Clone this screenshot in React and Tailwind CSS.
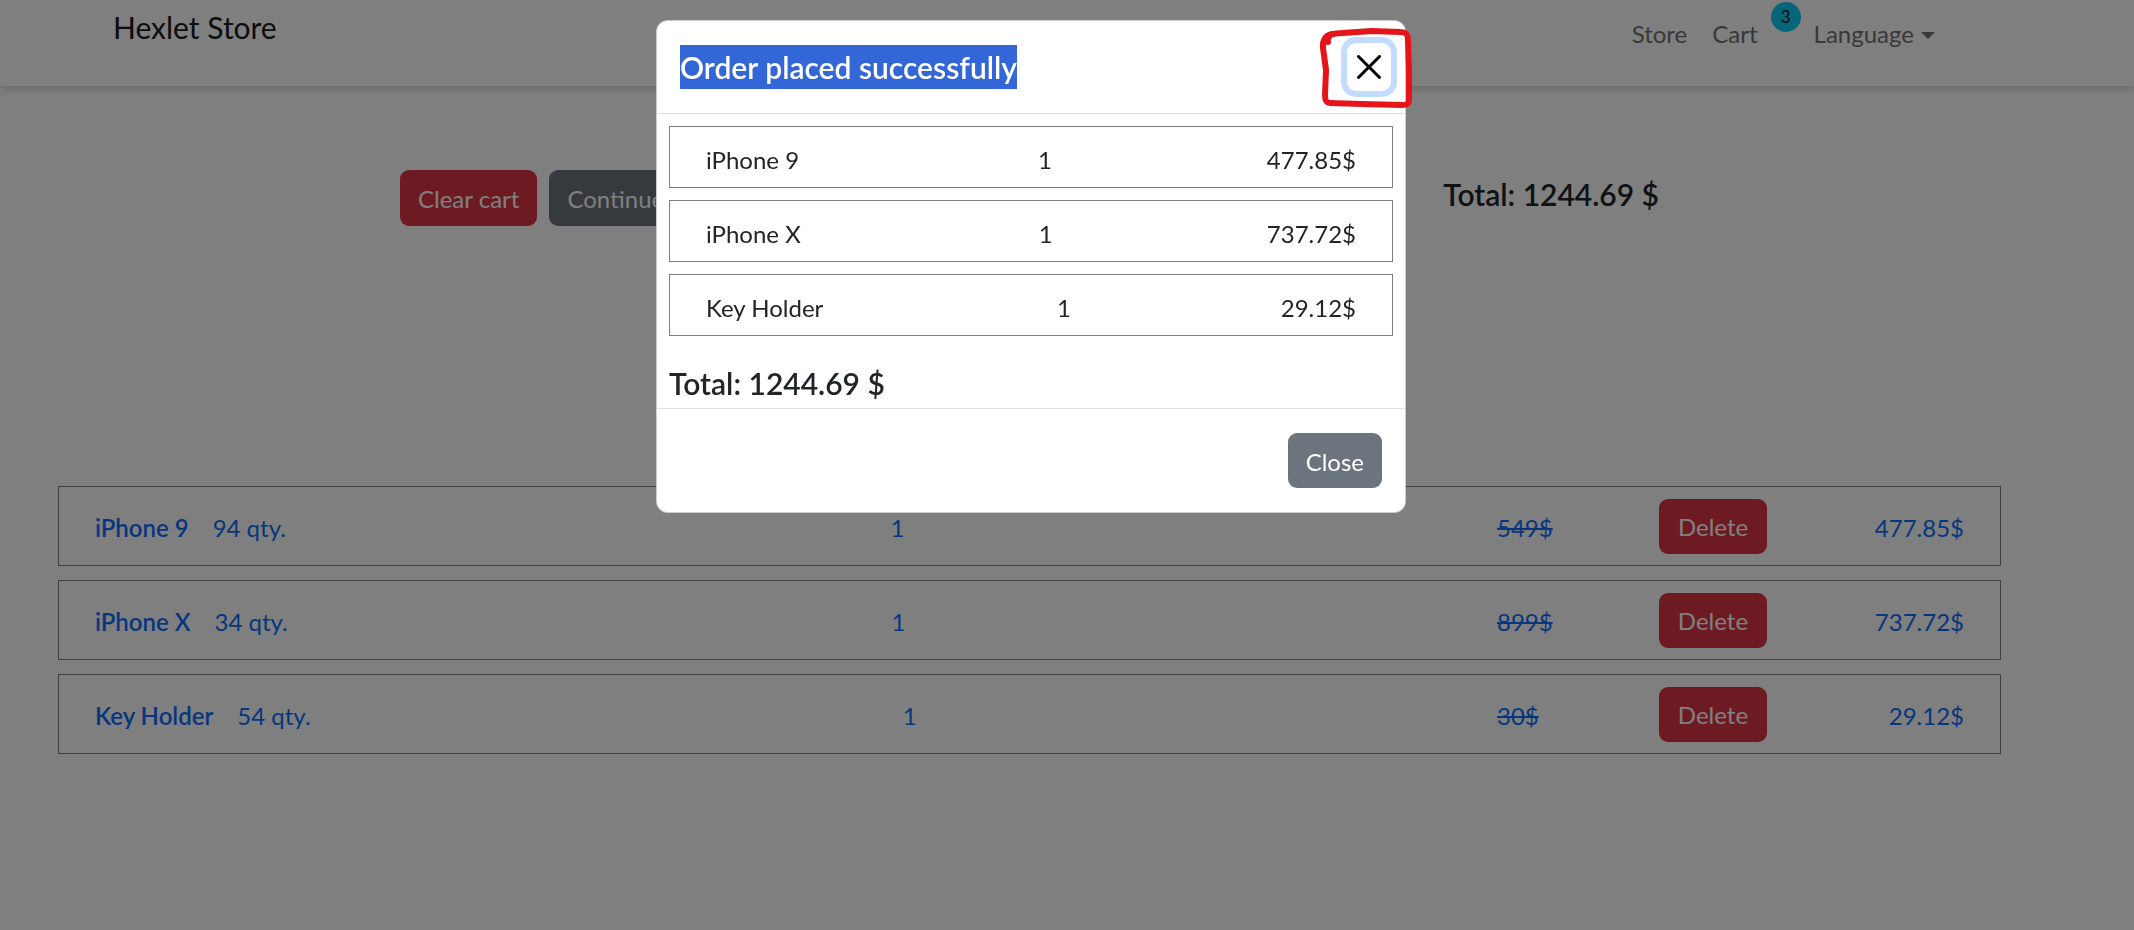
import React from 'react'

const cart = [
  { name: 'iPhone 9', stock: 94, qty: 1, old: '549$', price: '477.85$' },
  { name: 'iPhone X', stock: 34, qty: 1, old: '899$', price: '737.72$' },
  { name: 'Key Holder', stock: 54, qty: 1, old: '30$', price: '29.12$' },
]

function CloseX() {
  return (
    <svg width="24" height="24" viewBox="0 0 16 16" fill="#000">
      <path d="M.293.293a1 1 0 0 1 1.414 0L8 6.586 14.293.293a1 1 0 1 1 1.414 1.414L9.414 8l6.293 6.293a1 1 0 0 1-1.414 1.414L8 9.414l-6.293 6.293a1 1 0 0 1-1.414-1.414L6.586 8 .293 1.707a1 1 0 0 1 0-1.414z" />
    </svg>
  )
}

function Navbar() {
  return (
    <nav className="h-[86px] flex items-start bg-white shadow-[0_4px_8px_rgba(0,0,0,0.15)] relative">
      <a className="ml-[113px] mt-[5px] text-[30px] leading-[45px] text-[#1a1a1a]">Hexlet Store</a>
      <div className="ml-auto mr-[199px] flex items-start text-[24px] leading-[36px] text-[#737373]">
        <a className="mt-[16px]">Store</a>
        <a className="mt-[16px] ml-[25px]">Cart</a>
        <span className="mt-[2px] ml-[13px] w-[30px] h-[30px] rounded-full bg-[#0dcaf0] text-[#111] text-[17px] leading-[30px] text-center">3</span>
        <a className="mt-[16px] ml-[13px] flex items-center">
          Language
          <span className="ml-[7px] mt-[3px] w-0 h-0 border-t-[7px] border-t-[#737373] border-x-[7px] border-x-transparent" />
        </a>
      </div>
    </nav>
  )
}

function CartPage() {
  return (
    <main className="ml-[58px] w-[1943px] pt-[84px]">
      <div className="px-[342px] flex justify-between items-start">
        <div className="flex">
          <button className="h-[56px] px-[18px] pt-[2px] rounded-[9px] bg-[#dc3545] text-white text-[24px]">Clear cart</button>
          <button className="ml-[12px] h-[56px] px-[18px] pt-[2px] rounded-[9px] bg-[#6c757d] text-white text-[24px]">Continue shopping</button>
        </div>
        <h5 className="mt-[6px] text-[30px] leading-[36px] font-semibold text-[#212529]">Total: 1244.69 $</h5>
      </div>

      <div className="mt-[260px] flex flex-col gap-[14px]">
        {cart.map((item) => (
          <div key={item.name} className="h-[80px] border border-[#808080] px-[36px] flex items-center justify-between text-[24px] leading-[36px] text-[#0d6efd]">
            <div className="flex gap-[24px] pt-[4px]">
              <span className="font-semibold">{item.name}</span>
              <span>{item.stock} qty.</span>
            </div>
            <span className="ml-[12px] pt-[4px]">{item.qty}</span>
            <div className="flex items-center">
              <span className="w-[162px] pt-[4px] line-through">{item.old}</span>
              <button className="w-[108px] h-[55px] pt-[2px] rounded-[9px] bg-[#dc3545] text-white">Delete</button>
              <span className="w-[197px] pt-[4px] text-right">{item.price}</span>
            </div>
          </div>
        ))}
      </div>
    </main>
  )
}

function OrderModal() {
  return (
    <div className="absolute left-[656px] top-[20px] w-[750px] bg-white border border-black/20 rounded-[12px] text-[#212529]">
      <div className="h-[93px] pl-[23px] flex items-center border-b border-[#dee2e6]">
        <h5 className="text-[30px] font-semibold">
          <span className="inline-block leading-[44px] bg-[#3366d6] text-white">Order placed successfully</span>
        </h5>
        <button className="ml-auto mr-[14px] w-[44px] h-[48px] rounded-[9px] flex items-center justify-center shadow-[0_0_0_6px_#c2dbfe]">
          <CloseX />
        </button>
      </div>
      <div className="px-[12px] pt-[12px] pb-[9px]">
        <div className="flex flex-col gap-[12px]">
          {cart.map((item) => (
            <div key={item.name} className="border border-[#808080] px-[36px] pt-[15px] pb-[9px] flex justify-between text-[24px] leading-[36px]">
              <span>{item.name}</span>
              <span className="ml-[24px]">{item.qty}</span>
              <span>{item.price}</span>
            </div>
          ))}
        </div>
        <h5 className="mt-[27px] pt-[2px] h-[36px] text-[30px] leading-[36px] font-semibold">Total: 1244.69 $</h5>
      </div>
      <div className="border-t border-[#dee2e6] p-[24px] pr-[23px] flex justify-end">
        <button className="h-[55px] px-[18px] pt-[2px] rounded-[9px] bg-[#6c757d] text-white text-[24px]">Close</button>
      </div>
    </div>
  )
}

function Annotation() {
  return (
    <svg className="absolute left-[1312px] top-[20px]" width="106" height="92" viewBox="0 0 106 92" fill="none">
      <path
        d="M16 22 C14 16 20 13 30 13 L60 11 L88 12 C94 12 96 14 96 20 L97 50 L97 80 C97 84 95 85 90 85 L50 84 L18 83 C14 83 13 80 13 75 L14 50 L11 28 C10 20 14 15 20 14"
        stroke="#e5141b"
        strokeWidth="6"
        strokeLinecap="round"
        strokeLinejoin="round"
      />
    </svg>
  )
}

export default function App() {
  return (
    <div className="relative h-[930px] overflow-hidden bg-white font-['Lato',sans-serif]">
      <Navbar />
      <CartPage />
      <div className="fixed inset-0 bg-black/50" />
      <OrderModal />
      <Annotation />
    </div>
  )
}
